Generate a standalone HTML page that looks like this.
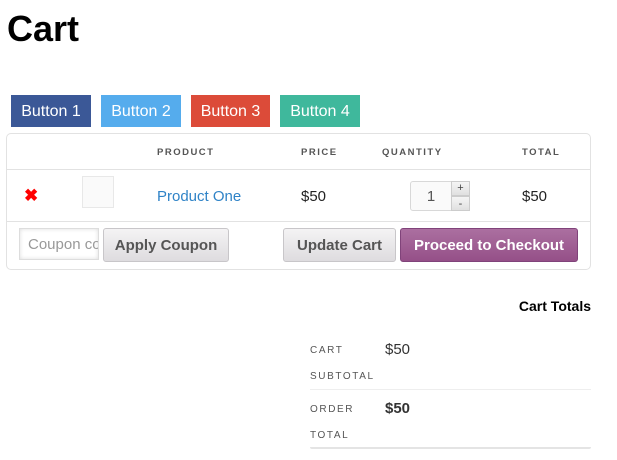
<!DOCTYPE html>
<html><head><meta charset="utf-8"><style>
*{box-sizing:border-box;margin:0;padding:0}
body{width:617px;height:460px;background:#fff;font-family:"Liberation Sans",Arial,sans-serif;position:relative;overflow:hidden}
.a{position:absolute}
h1{position:absolute;left:7px;top:8px;font-size:36px;font-weight:bold;color:#000}
.b{position:absolute;top:95px;height:32px;width:80px;color:#fff;font-size:16px;line-height:33px;text-align:center}
.th{position:absolute;top:147px;font-size:9.5px;font-weight:bold;letter-spacing:1.5px;color:#555}
.btn{position:absolute;top:228px;height:34px;border:1px solid #c8c6c9;border-radius:3px;background:linear-gradient(#f4f3f4,#dedcdf);color:#555;font-weight:bold;font-size:15px;line-height:34px;text-align:center}
.lbl{position:absolute;font-size:10px;letter-spacing:1.6px;color:#555}
</style></head><body>
<h1>Cart</h1>
<div class="b" style="left:11px;background:#3b5897">Button 1</div>
<div class="b" style="left:101px;background:#55aced">Button 2</div>
<div class="b" style="left:191px;width:79px;background:#dc4b39">Button 3</div>
<div class="b" style="left:280px;background:#3fb89c">Button 4</div>

<div class="a" style="left:6px;top:133px;width:585px;height:137px;border:1px solid #e2e2e2;border-radius:5px"></div>
<div class="a" style="left:7px;top:169px;width:583px;height:1px;background:#e2e2e2"></div>
<div class="a" style="left:7px;top:221px;width:583px;height:1px;background:#e2e2e2"></div>
<div class="th" style="left:157px">PRODUCT</div>
<div class="th" style="left:301px">PRICE</div>
<div class="th" style="left:382px">QUANTITY</div>
<div class="th" style="left:522px">TOTAL</div>

<div class="a" style="left:24px;top:186px;color:#f00;font-size:17px;font-weight:bold">✖</div>
<div class="a" style="left:82px;top:176px;width:32px;height:32px;border:1px solid #e8e8e8;background:#fafafa"></div>
<div class="a" style="left:157px;top:188px;font-size:15px;color:#2f83c7">Product One</div>
<div class="a" style="left:301px;top:188px;font-size:15px;color:#222">$50</div>
<div class="a" style="left:522px;top:188px;font-size:15px;color:#222">$50</div>
<div class="a" style="left:410px;top:181px;width:42px;height:30px;border:1px solid #d8d8d8;border-radius:3px 0 0 3px;background:#fafafa;color:#555;font-size:15px;text-align:center;line-height:29px">1</div>
<div class="a" style="left:451px;top:181px;width:19px;height:15px;border:1px solid #ccc;background:linear-gradient(#f5f5f5,#e0e0e0);font-size:11px;text-align:center;line-height:12px;color:#444">+</div>
<div class="a" style="left:451px;top:196px;width:19px;height:15px;border:1px solid #ccc;background:linear-gradient(#f5f5f5,#e0e0e0);font-size:11px;text-align:center;line-height:14px;color:#444">-</div>

<div class="a" style="left:19px;top:228px;width:80px;height:32px;border:1px solid #ddd;box-shadow:inset 0 0 4px #ddd;color:#999;font-size:15px;line-height:32px;padding-left:8px;overflow:hidden;white-space:nowrap">Coupon code</div>
<div class="btn" style="left:103px;width:126px">Apply Coupon</div>
<div class="btn" style="left:283px;width:113px">Update Cart</div>
<div class="btn" style="left:400px;width:178px;background:linear-gradient(#ab6fa0,#955088);border-color:#80437a;color:#fff">Proceed to Checkout</div>

<div class="a" style="left:515px;top:298px;font-size:14px;font-weight:bold;color:#000;width:76px;text-align:right">Cart Totals</div>
<div class="lbl" style="left:310px;top:345px">CART</div>
<div class="lbl" style="left:310px;top:371px">SUBTOTAL</div>
<div class="a" style="left:385px;top:341px;font-size:15px;color:#333">$50</div>
<div class="a" style="left:310px;top:389px;width:281px;height:1px;background:#eee"></div>
<div class="lbl" style="left:310px;top:404px">ORDER</div>
<div class="lbl" style="left:310px;top:430px">TOTAL</div>
<div class="a" style="left:385px;top:400px;font-size:15px;font-weight:bold;color:#333">$50</div>
<div class="a" style="left:310px;top:447px;width:281px;height:2px;border-radius:0 0 4px 4px;background:#e4e4e4"></div>
</body></html>
